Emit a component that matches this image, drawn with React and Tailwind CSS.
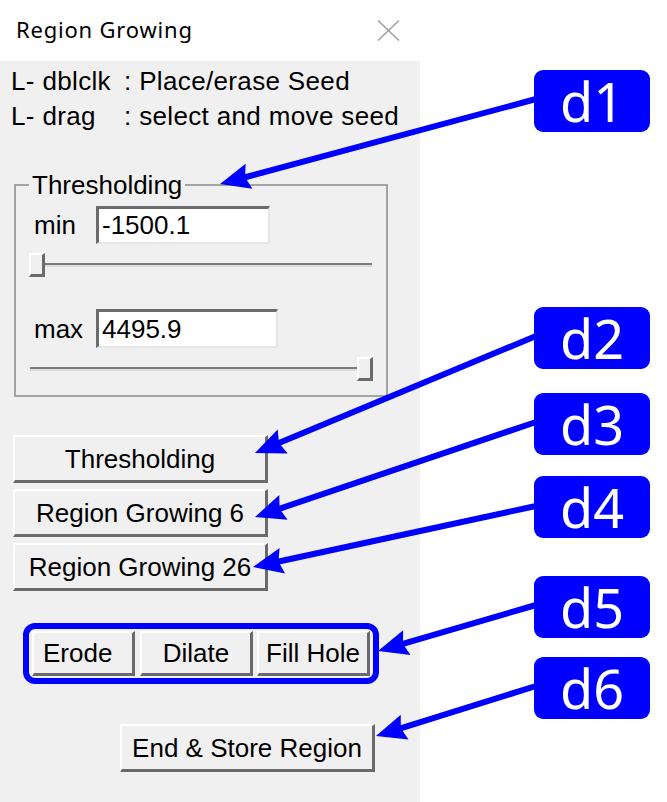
import React from "react";

const ui = "font-['Liberation_Sans',Arial,sans-serif]";

function Btn({ children, className = "" }) {
  return (
    <div
      className={
        "flex items-center justify-center bg-[#f0f0f0] border-t-2 border-l-2 border-t-white border-l-white border-b-[3px] border-r-[3px] border-b-[#6a6a6a] border-r-[#6a6a6a] text-[26px] text-black leading-none whitespace-nowrap " +
        className
      }
    >
      {children}
    </div>
  );
}

function Thumb() {
  return (
    <div className="w-[16px] h-[24px] shrink-0 bg-[#f0f0f0] border-t-2 border-l-2 border-t-white border-l-white border-b-[3px] border-r-[3px] border-b-[#6a6a6a] border-r-[#6a6a6a]" />
  );
}

function Track() {
  return <div className="flex-1 h-[4px] border-t-2 border-t-[#7c7c7c] border-b-2 border-b-[#dcdcdc]" />;
}

const arrows = [
  [536, 99, 220, 184],
  [536, 336, 255, 453],
  [536, 422, 255, 517],
  [536, 506, 253, 567],
  [536, 605, 378, 651],
  [536, 686, 376, 736],
];

function Arrow({ a }) {
  const [sx, sy, tx, ty] = a;
  const dx = sx - tx;
  const dy = sy - ty;
  const len = Math.hypot(dx, dy);
  const ux = dx / len;
  const uy = dy / len;
  const L = 30;
  const W = 13;
  const bx = tx + ux * L;
  const by = ty + uy * L;
  const nx = -uy;
  const ny = ux;
  const pts = `${tx},${ty} ${bx + nx * W},${by + ny * W} ${tx + ux * (L - 4)},${ty + uy * (L - 4)} ${bx - nx * W},${by - ny * W}`;
  return (
    <g>
      <line x1={sx} y1={sy} x2={tx + ux * (L - 6)} y2={ty + uy * (L - 6)} stroke="#0000ff" strokeWidth="6" />
      <polygon points={pts} fill="#0000ff" />
    </g>
  );
}

const badges = [
  ["d1", 70],
  ["d2", 307],
  ["d3", 393],
  ["d4", 476],
  ["d5", 576],
  ["d6", 657],
];

export default function App() {
  return (
    <div className="relative w-[667px] h-[802px] bg-white overflow-hidden">
      <div className="w-[420px] flex flex-col">
        <div className="h-[61px] bg-white flex items-center justify-between pl-[16px] pr-[20px] pb-[3px]">
          <span className="font-['Noto_Sans',sans-serif] text-[22px] tracking-[0.8px] text-black leading-none">Region Growing</span>
          <svg width="23" height="21" viewBox="0 0 23 21" className="mt-[2px]">
            <line x1="1" y1="0.5" x2="22" y2="20.5" stroke="#a3a3a3" strokeWidth="1.6" />
            <line x1="22" y1="0.5" x2="1" y2="20.5" stroke="#a3a3a3" strokeWidth="1.6" />
          </svg>
        </div>
        <div className={"bg-[#f0f0f0] h-[741px] flex flex-col text-black " + ui}>
          <div className="mt-[3px] pl-[11px] text-[26px] leading-[35px] tracking-[0.35px] whitespace-nowrap">
            <div className="flex">
              <span className="w-[113px]">L- dblclk</span>
              <span>: Place/erase Seed</span>
            </div>
            <div className="flex">
              <span className="w-[113px]">L- drag</span>
              <span>: select and move seed</span>
            </div>
          </div>

          <fieldset className="mt-[36px] ml-[14px] w-[374px] border-2 border-[#a4a4a4] pb-[14px]">
            <legend className="ml-[13px] px-[3px] text-[26px] leading-[30px]">Thresholding</legend>
            <div className="mt-[6px] flex items-center pl-[18px]">
              <span className="w-[62px] text-[26px] leading-none">min</span>
              <input
                readOnly
                defaultValue="-1500.1"
                className="w-[174px] h-[38px] bg-white border-t-[3px] border-l-[3px] border-t-[#6b6b6b] border-l-[#6b6b6b] border-b-2 border-r-2 border-b-[#e6e6e6] border-r-[#e6e6e6] px-[3px] text-[26px] text-black outline-none"
              />
            </div>
            <div className="mt-[9px] ml-[13px] w-[343px] h-[24px] flex items-center">
              <Thumb />
              <Track />
            </div>
            <div className="mt-[32px] flex items-center pl-[18px]">
              <span className="w-[62px] text-[26px] leading-none">max</span>
              <input
                readOnly
                defaultValue="4495.9"
                className="w-[182px] h-[39px] bg-white border-t-[3px] border-l-[3px] border-t-[#6b6b6b] border-l-[#6b6b6b] border-b-2 border-r-2 border-b-[#e6e6e6] border-r-[#e6e6e6] px-[3px] text-[26px] text-black outline-none"
              />
            </div>
            <div className="mt-[9px] ml-[14px] w-[343px] h-[24px] flex items-center">
              <Track />
              <Thumb />
            </div>
          </fieldset>

          <div className="mt-[38px] ml-[13px] w-[255px] flex flex-col gap-[6px]">
            <Btn className="h-[48px]">Thresholding</Btn>
            <Btn className="h-[48px]">Region Growing 6</Btn>
            <Btn className="h-[48px]">Region Growing 26</Btn>
          </div>

          <div className="mt-[32px] ml-[23px] w-[356px] h-[61px] border-[6px] border-[#0000ff] rounded-[12px] py-[2px] px-[3px] flex">
            <Btn className="w-[103px] h-[45px] !justify-start pl-[9px]">Erode</Btn>
            <Btn className="ml-[5px] w-[113px] h-[45px]">Dilate</Btn>
            <Btn className="ml-[4px] w-[113px] h-[45px]">Fill Hole</Btn>
          </div>

          <Btn className="mt-[40px] ml-[120px] w-[255px] h-[48px]">End &amp; Store Region</Btn>
        </div>
      </div>

      <svg className="absolute left-0 top-0 pointer-events-none" width="667" height="802" viewBox="0 0 667 802">
        {arrows.map((a, i) => (
          <Arrow key={i} a={a} />
        ))}
      </svg>

      {badges.map(([t, top]) => (
        <div
          key={t}
          className="absolute left-[534px] w-[116px] h-[62px] bg-[#0000ff] rounded-[9px] flex items-center justify-center font-['Noto_Sans',sans-serif] text-[54px] leading-none text-white"
          style={{ top }}
        >
          {t}
        </div>
      ))}
    </div>
  );
}
